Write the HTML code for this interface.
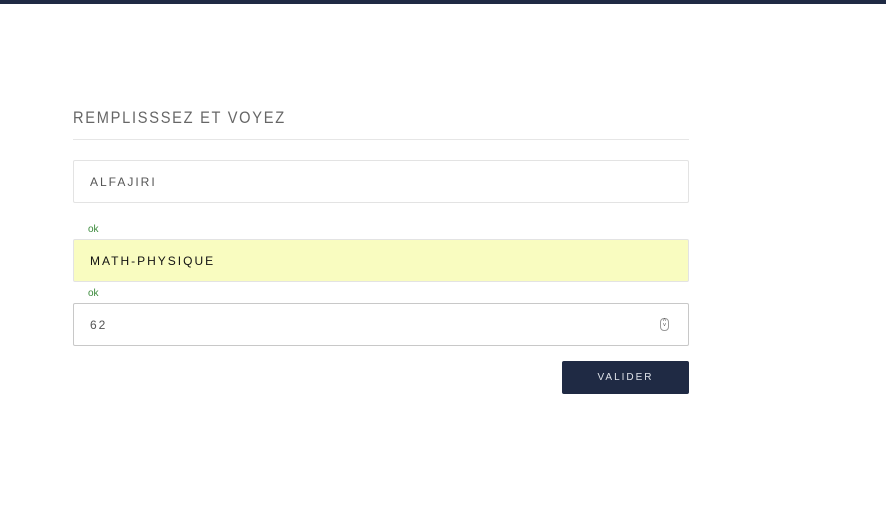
<!DOCTYPE html>
<html><head><meta charset="utf-8"><style>
*{margin:0;padding:0;box-sizing:border-box}
body{width:886px;height:511px;background:#fff;font-family:"Liberation Sans",sans-serif;position:relative;overflow:hidden}
.top{position:absolute;left:0;top:0;width:886px;height:4px;background:#1f2a44}
.t{position:absolute;left:73px;top:108px;font-size:17px;letter-spacing:2px;color:#666;white-space:nowrap;transform:scaleX(.86);transform-origin:left}
.hr{position:absolute;left:73px;top:139px;width:616px;height:1px;background:#e6e6e6}
.in{position:absolute;left:73px;width:616px;height:43px;border:1px solid #e3e3e3;font-size:12px;letter-spacing:2px;padding-left:16px;line-height:42px;color:#555;border-radius:2px}
.ok{position:absolute;left:88px;font-size:10px;color:#3a8a3a}
.btn{position:absolute;left:562px;top:361px;width:127px;height:33px;background:#1f2a44;color:#dfe3ea;font-size:10px;letter-spacing:2px;text-align:center;line-height:33px;border-radius:2px}
.sp{position:absolute;left:660px;top:318px;width:9px;height:13px;border:1px solid #999;border-radius:4px;font-size:6px;line-height:5px;text-align:center;color:#555}
</style></head><body>
<div class="top"></div>
<div class="t">REMPLISSSEZ ET VOYEZ</div>
<div class="hr"></div>
<div class="in" style="top:160px">ALFAJIRI</div>
<div class="ok" style="top:224px">ok</div>
<div class="in" style="top:239px;background:#f9fcc0;color:#111">MATH-PHYSIQUE</div>
<div class="ok" style="top:288px">ok</div>
<div class="in" style="top:303px;border-color:#c8c8c8">62</div>
<div class="sp">˄<br>˅</div>
<div class="btn">VALIDER</div>
</body></html>
